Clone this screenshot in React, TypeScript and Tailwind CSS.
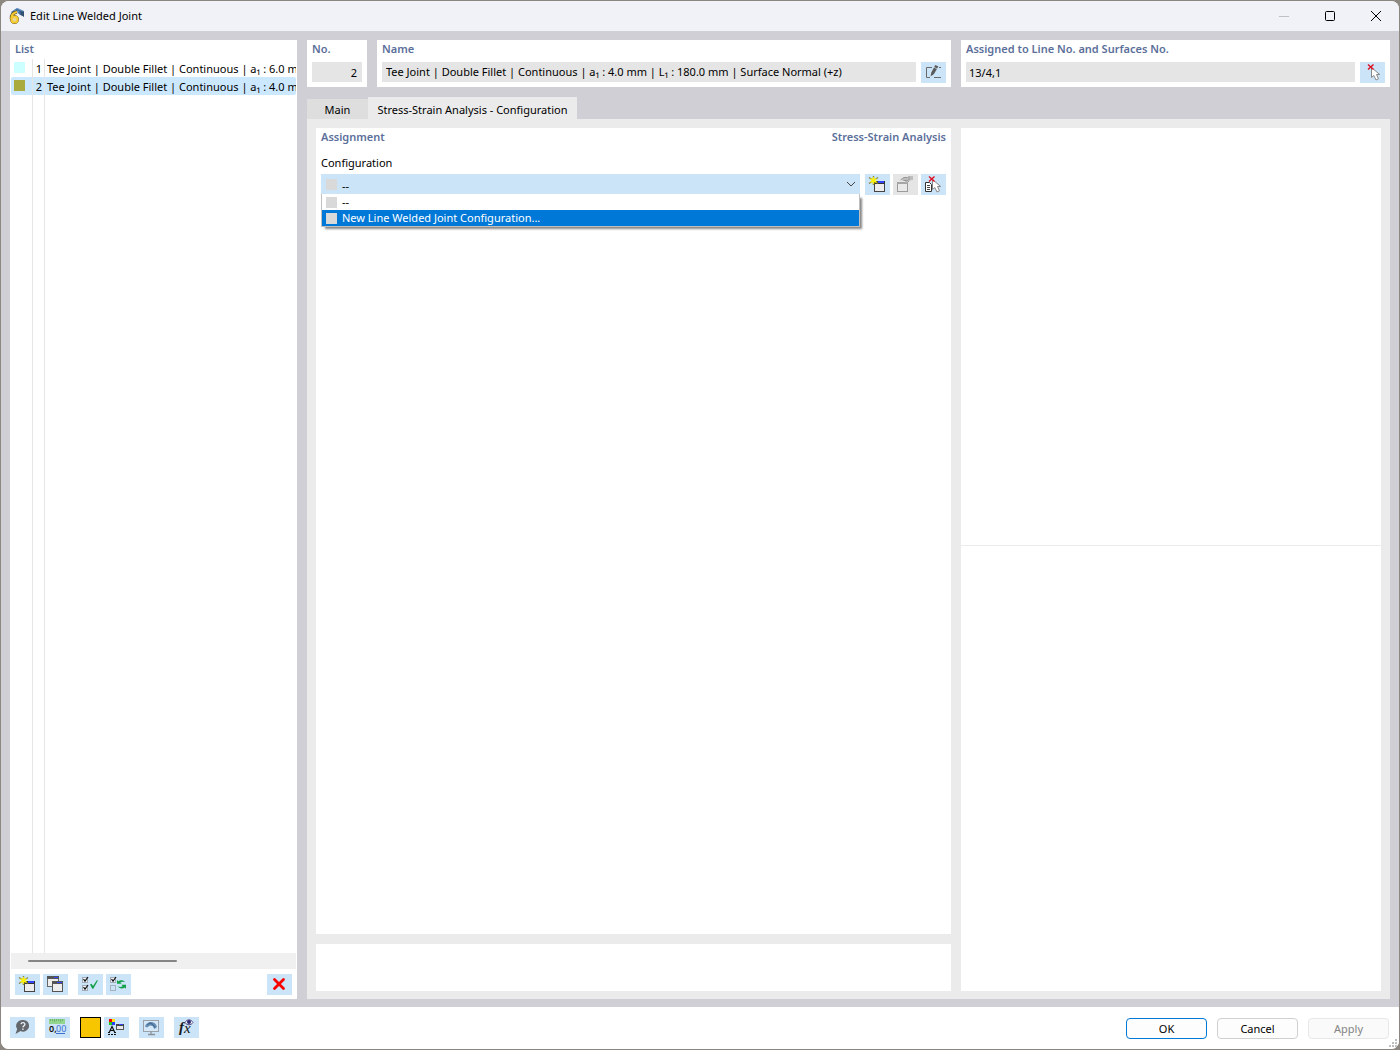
import React, { useState } from 'react';

interface Joint {
  no: number;
  color: string;
  name: string;
}

const joints: Joint[] = [
  { no: 1, color: 'bg-[#ccffff]', name: 'Tee Joint | Double Fillet | Continuous | a₁ : 6.0 mm | Surface Normal (+z)' },
  { no: 2, color: 'bg-[#a9ab3e]', name: 'Tee Joint | Double Fillet | Continuous | a₁ : 4.0 mm | L₁ : 180.0 mm | Surface Normal (+z)' },
];

const configurations = ['--', 'New Line Welded Joint Configuration...'];

const Icon: React.FC<{ children: React.ReactNode }> = ({ children }) => (
  <svg width="25" height="21" viewBox="0 0 25 21" fill="none" className="block">
    {children}
  </svg>
);

const Star = () => (
  <g>
    <path d="M8.5 2v9M4 3.5l9 6M13 3.5l-9 6" stroke="#85853c" strokeWidth="1.4" />
    <path d="M8.5 3v7M5.5 4.6l6 3.8M11.5 4.6l-6 3.8" stroke="#fff200" strokeWidth="1.3" />
    <circle cx="8.5" cy="6.5" r="2" fill="#fff200" />
  </g>
);

const NewIcon = () => (
  <Icon>
    <rect x="9.5" y="7.5" width="10" height="10" fill="#ededed" stroke="#444" />
    <rect x="9" y="7" width="11" height="3" fill="#333" />
    <rect x="13" y="7" width="6" height="2" fill="#3445ff" />
    <Star />
  </Icon>
);

const CopyIcon = () => (
  <Icon>
    <rect x="4.5" y="2.5" width="11" height="10" fill="#ededed" stroke="#666" />
    <rect x="4" y="2" width="12" height="3" fill="#555" />
    <rect x="11" y="3" width="4" height="1" fill="#3445ff" />
    <rect x="9.5" y="7.5" width="10" height="10" fill="#ededed" stroke="#555" />
    <rect x="9" y="7" width="11" height="3" fill="#555" />
    <rect x="14" y="8" width="5" height="1" fill="#3445ff" />
  </Icon>
);

const EditConfigIcon = () => (
  <Icon>
    <rect x="4.5" y="8.5" width="10" height="9" fill="#e9e9e9" stroke="#9b9b9b" />
    <rect x="4" y="8" width="11" height="2" fill="#a5a5a5" />
    <path d="M8 6l3-2.5h3l3-1.5h3v4l-4 .5-2 2h-2V7z" fill="#bdbdbd" />
    <path d="M7.5 6l3.500-2.500h3.500M10.500 6.500h4l1.500 1.500M16 2v4.500" stroke="#979797" />
  </Icon>
);

const Cursor = () => (
  <g>
    <path d="M11.5 5.500v10l2.300-2 2.200 4.500 2.500-1.200-2-4.300h3.200z" fill="#fff" stroke="#888" />
    <path d="M8 2.500l5.500 5M13.500 2.500l-5.500 5" stroke="#e01020" strokeWidth="1.400" />
  </g>
);

const PickIcon = () => (
  <Icon>
    <Cursor />
  </Icon>
);

const PickListIcon = () => (
  <Icon>
    <path d="M4.5 8.500h4l2 2v7h-6z" fill="#fff" stroke="#333" />
    <path d="M6 11.500h3M6 13.500h3M6 15.500h3" stroke="#444" />
    <Cursor />
  </Icon>
);

const PencilIcon = () => (
  <Icon>
    <path d="M11 5.500H5.500v10H9M13 15.500h7M18 5.500h2" stroke="#6a6a6a" />
    <path d="M9.500 14.500l.8-4 4-7.500 3 1.500-4.300 7.500z" fill="#5a5a5a" />
    <path d="M13 5.300l3 1.500" stroke="#cce4f7" strokeWidth=".7" />
  </Icon>
);

const Tick: React.FC<{ y: number }> = ({ y }) => (
  <g>
    <rect x="4.5" y={y + 0.5} width="5" height="5" fill="#eef6fc" stroke="#a3acb5" />
    <path d={`M5.5 ${y + 2}l1.5 2.2L10 ${y}`} stroke="#111" strokeWidth="1.2" />
  </g>
);

const CheckAllIcon = () => (
  <Icon>
    <Tick y={3} />
    <Tick y={11} />
    <path d="M12 10.500l1.500-.8 1.500 2.300 4-6 .8.8-4.500 8h-1z" fill="#10a048" />
  </Icon>
);

const InvertIcon = () => (
  <Icon>
    <Tick y={3} />
    <rect x="4.5" y="11.500" width="5" height="5" stroke="#a5b2bd" />
    <path d="M11 9.800V6l1.300 1.200c2-1.500 5-1.300 7 1-2-.7-3.700-.6-5 .3l1.200 1.300z" fill="#10a048" />
    <path d="M20 10.700v4l-1.300-1.200c-2 1.500-5 1.300-7-1 2 .7 3.700.6 5-.3l-1.200-1.500z" fill="#10a048" />
  </Icon>
);

const DeleteIcon = () => (
  <Icon>
    <path d="M7.500 5.500l9 9M16.500 5.500l-9 9" stroke="#fa0000" strokeWidth="2.800" strokeLinecap="round" />
  </Icon>
);

const HelpIcon = () => (
  <Icon>
    <path d="M13 3a6 5.800 0 1 1-2.500 11L5.500 17l1.700-5A6 5.800 0 0 1 13 3z" fill="#63666a" />
    <path d="M11 7.200c.3-2.200 4.100-2 3.900.2-.1 1.300-1.900 1.400-2 3" stroke="#e8f2fa" strokeWidth="1.300" />
    <rect x="12.200" y="11.500" width="1.400" height="1.400" fill="#e8f2fa" />
  </Icon>
);

const UnitsIcon = () => (
  <Icon>
    <rect x="4" y="2" width="16" height="5" fill="#93d48f" />
    <path d="M5.500 2v2M7.500 2v2M9.500 2v3M11.500 2v2M13.500 2v2M15.500 2v3M17.500 2v2" stroke="#6db56a" />
    <text x="4" y="15" fontSize="9" fontWeight="600" fill="#111">0,</text>
    <text x="11" y="15" fontSize="9" fill="#3a6fd0">00</text>
    <path d="M11 16.500h9" stroke="#3a6fd0" />
  </Icon>
);

const DisplayIcon = () => (
  <Icon>
    <rect x="5" y="2" width="3" height="3" fill="#f00" />
    <rect x="8" y="2" width="3" height="3" fill="#ffe600" />
    <rect x="5" y="5" width="3" height="3" fill="#1ec81e" />
    <rect x="8" y="5" width="3" height="3" fill="#2440ff" />
    <path d="M5 16l3-6.500 3 6.500M6 13.500h4M4 15.500h2M10 15.500h2" stroke="#111" strokeWidth="1.200" />
    <path d="M4 17.500h8" stroke="#111" strokeDasharray="2 1" />
    <rect x="12.500" y="7.500" width="7" height="5" fill="#e8e8e8" stroke="#555" />
    <rect x="12" y="7" width="8" height="2" fill="#444" />
    <rect x="15" y="7" width="4" height="1" fill="#3445ff" />
  </Icon>
);

const MonitorIcon = () => (
  <Icon>
    <rect x="4.500" y="3.500" width="15" height="11" fill="#d5e8f7" stroke="#9aa1a8" />
    <path d="M6 9.500c1-3.500 4-5 7-4.500 3 .5 4.500 2.500 5 5l-2.500 2-2-3-2.500-.5-3 2z" fill="#668db3" />
    <path d="M8 8c2-2 5-2 7 1M10 6c3 0 5 2 6 5" stroke="#3f6389" strokeWidth=".8" />
    <path d="M12 14.500V17M9 17.500h7" stroke="#8a9199" strokeWidth="1.300" />
  </Icon>
);

const FormulaIcon = () => (
  <Icon>
    <text x="5" y="15" fontSize="15" fontStyle="italic" fontWeight="bold" fill="#1a1a1a" style={{ fontFamily: '"Liberation Serif", serif' }}>f</text>
    <text x="10" y="16" fontSize="15" fontStyle="italic" fill="#111" style={{ fontFamily: '"Liberation Serif", serif' }}>x</text>
    <path d="M11 5.500c2-3.500 6-3.500 8 0-2 3-6 3-8 0z" fill="#fff" stroke="#4b4680" />
    <circle cx="15" cy="5" r="2" fill="#2c2870" />
  </Icon>
);

const AppIcon = () => (
  <svg width="16" height="16" viewBox="0 0 16 16" fill="none">
    <path d="M2 4l6-4 7 3v5l-4-1-3-3-4 2z" fill="#4472a5" />
    <path d="M11 3l4 1v5l-3-2z" fill="#35506f" />
    <path d="M5 2l5 2M8 0l6 3" stroke="#86aed2" strokeWidth=".8" />
    <path d="M8 4C4 4.500 2 7.500 2.500 11" stroke="#5c5433" strokeWidth="3.600" />
    <circle cx="5.500" cy="11.500" r="3" stroke="#6d6332" strokeWidth="3" />
    <path d="M8 4C4 4.500 2 7.500 2.500 11" stroke="#f7cb2e" strokeWidth="2.200" />
    <circle cx="5.500" cy="11.500" r="3" fill="#e6d69a" stroke="#f7cb2e" strokeWidth="2" />
  </svg>
);

interface ToolButtonProps {
  label: string;
  disabled?: boolean;
  children: React.ReactNode;
}

const ToolButton: React.FC<ToolButtonProps> = ({ label, disabled, children }) => (
  <button
    aria-label={label}
    disabled={disabled}
    className="w-[25px] h-[21px] shrink-0 bg-[#cce4f7] disabled:bg-[#e5e5e5]"
  >
    {children}
  </button>
);

const heading = 'font-semibold text-[#5b6f9a]';

const App: React.FC = () => {
  const [selected, setSelected] = useState(2);
  const [config, setConfig] = useState('--');
  const [isOpen, setIsOpen] = useState(true);
  const [highlighted, setHighlighted] = useState(configurations[1]);

  return (
    <div className="min-h-screen flex bg-[#8c8780] p-px font-['Noto_Sans','Open_Sans',sans-serif] text-[11px] leading-4 text-black">
      <div className="flex-1 min-w-0 flex flex-col rounded-lg overflow-hidden bg-white">
        {/* Title bar */}
        <header className="h-[30px] flex items-center bg-[#f0f2f7] pl-2">
          <AppIcon />
          <h1 className="ml-[5px] flex-1">Edit Line Welded Joint</h1>
          <button aria-label="Minimize" disabled className="w-[46px] h-full flex items-center justify-center">
            <svg width="10" height="10" stroke="#c0c0c4" fill="none"><path d="M0 5.5h10" /></svg>
          </button>
          <button aria-label="Maximize" className="w-[46px] h-full flex items-center justify-center">
            <svg width="10" height="10" stroke="#000" fill="none"><rect x=".5" y=".5" width="9" height="9" rx="1" /></svg>
          </button>
          <button aria-label="Close" className="w-[46px] h-full flex items-center justify-center">
            <svg width="10" height="10" stroke="#000" fill="none"><path d="M0 0l10 10M10 0L0 10" /></svg>
          </button>
        </header>

        <div className="flex-1 flex gap-2.5 bg-[#d0cfd5] px-[9px] pt-[9px] pb-2">
          {/* List */}
          <aside className="w-[287px] shrink-0 flex flex-col bg-white">
            <h2 className={`${heading} pl-[5px] pt-px h-[19px]`}>List</h2>
            <div className="flex-1 flex flex-col overflow-hidden px-px">
              {joints.map(joint => (
                <button
                  key={joint.no}
                  onClick={() => setSelected(joint.no)}
                  className={`h-[18px] shrink-0 flex items-stretch text-left whitespace-nowrap overflow-hidden ${selected === joint.no ? 'bg-[#cce8ff] rounded-xs' : ''}`}
                >
                  <span className="w-[22px] pl-[3px] pt-[3px] border-r border-[#e5e5e5] shrink-0">
                    <span className={`block size-[11px] ${joint.color}`} />
                  </span>
                  <span className="w-3 shrink-0 border-r border-[#e5e5e5] text-right pr-0.5 pt-0.5">{joint.no}</span>
                  <span className="pl-0.5 pt-0.5">{joint.name}</span>
                </button>
              ))}
              <div className="flex-1 flex">
                <div className="w-[22px] border-r border-[#e5e5e5]" />
                <div className="w-3 border-r border-[#e5e5e5]" />
              </div>
            </div>
            <div className="h-4 mx-px bg-[#f0f0f0] flex items-center pl-[17px]">
              <div className="w-[149px] h-0.5 bg-[#868686] rounded-full" />
            </div>
            <div className="flex gap-[3px] px-[5px] pt-[5px] pb-1">
              <ToolButton label="New"><NewIcon /></ToolButton>
              <ToolButton label="Copy"><CopyIcon /></ToolButton>
              <div className="w-1" />
              <ToolButton label="Check all"><CheckAllIcon /></ToolButton>
              <ToolButton label="Invert"><InvertIcon /></ToolButton>
              <div className="flex-1" />
              <ToolButton label="Delete"><DeleteIcon /></ToolButton>
            </div>
          </aside>

          <main className="flex-1 min-w-0 flex flex-col">
            <div className="flex gap-2.5">
              <div className="w-[60px] h-[47px] bg-white px-[5px] pt-px">
                <label htmlFor="no" className={`${heading} block h-[21px]`}>No.</label>
                <input id="no" readOnly value="2" className="block w-full h-5 pr-[5px] bg-[#e5e5e5] text-right" />
              </div>
              <div className="flex-1 min-w-0 h-[47px] bg-white px-[5px] pt-px">
                <label htmlFor="name" className={`${heading} block h-[21px]`}>Name</label>
                <div className="flex gap-[5px]">
                  <input id="name" readOnly value={joints[1].name} className="flex-1 min-w-0 h-5 px-1 pb-px bg-[#e5e5e5]" />
                  <ToolButton label="Edit name"><PencilIcon /></ToolButton>
                </div>
              </div>
              <div className="w-[429px] h-[47px] bg-white px-[5px] pt-px">
                <label htmlFor="assigned" className={`${heading} block h-[21px]`}>Assigned to Line No. and Surfaces No.</label>
                <div className="flex gap-[5px]">
                  <input id="assigned" readOnly value="13/4,1" className="flex-1 min-w-0 h-5 px-[3px] bg-[#e5e5e5]" />
                  <ToolButton label="Pick lines"><PickIcon /></ToolButton>
                </div>
              </div>
            </div>

            {/* Tabs */}
            <div className="flex items-end mt-2.5" role="tablist">
              <button role="tab" aria-selected="false" className="w-[61px] h-5 pt-0.5 bg-[#dedede]">Main</button>
              <button role="tab" aria-selected="true" className="w-[209px] h-[22px] pt-1 bg-[#ebebeb]">Stress-Strain Analysis - Configuration</button>
            </div>

            <div className="flex-1 flex gap-2.5 bg-[#ebebeb] p-[9px] pb-2">
              <div className="flex-1 min-w-0 flex flex-col gap-2.5">
                <section className="flex-1 bg-white px-[5px] pt-px">
                  <div className={`${heading} flex justify-between`}>
                    <h2>Assignment</h2>
                    <span>Stress-Strain Analysis</span>
                  </div>
                  <label htmlFor="configuration" className="block mt-2.5 h-[19px]">Configuration</label>
                  <div className="flex gap-[3px]">
                    <div className="relative flex-1 mr-0.5">
                      <select
                        id="configuration"
                        value={config}
                        onChange={e => setConfig(e.target.value)}
                        onMouseDown={e => {
                          e.preventDefault();
                          setIsOpen(!isOpen);
                        }}
                        className="block w-full h-5 appearance-none bg-[#cce4f7] pl-[21px] pt-[3px]"
                      >
                        {configurations.map(c => <option key={c}>{c}</option>)}
                      </select>
                      <span className="absolute left-[5px] top-[5px] size-[11px] bg-[#d9d9d9]" />
                      <svg className="absolute right-1 top-1.5 pointer-events-none" width="10" height="8" fill="none" stroke="#444">
                        <path d="M1 2l4 4 4-4" />
                      </svg>
                      {isOpen && (
                        <ul className="absolute top-5 left-0 right-0 z-10 bg-white border border-t-0 border-[#c0c0c0] shadow-[3px_3px_2px_-1px_#888]">
                          {configurations.map(c => (
                            <li key={c}>
                              <button
                                onMouseEnter={() => setHighlighted(c)}
                                onClick={() => {
                                  setConfig(c);
                                  setIsOpen(false);
                                }}
                                className={`w-full h-4 flex items-center gap-[5px] pl-1 ${highlighted === c ? 'bg-[#0078d7] text-white' : ''}`}
                              >
                                <span className="size-[11px] bg-[#d9d9d9]" />
                                {c}
                              </button>
                            </li>
                          ))}
                        </ul>
                      )}
                    </div>
                    <ToolButton label="New configuration"><NewIcon /></ToolButton>
                    <ToolButton label="Edit configuration" disabled><EditConfigIcon /></ToolButton>
                    <ToolButton label="Pick configuration"><PickListIcon /></ToolButton>
                  </div>
                </section>
                <section className="h-[47px] bg-white" />
              </div>
              <div className="w-[420px] flex flex-col bg-white">
                <div className="h-[418px] border-b border-[#ebebeb]" />
                <div className="flex-1" />
              </div>
            </div>
          </main>
        </div>

        {/* Footer */}
        <footer className="relative flex items-end justify-between pl-[9px] pr-2.5 pt-2.5 pb-2.5 bg-white">
          <div className="flex gap-2.5 pb-px">
            <ToolButton label="Help"><HelpIcon /></ToolButton>
            <ToolButton label="Units"><UnitsIcon /></ToolButton>
            <div className="flex gap-[3px]">
              <button aria-label="Color" className="w-[21px] h-[21px] bg-[#f7c600] border border-black" />
              <ToolButton label="Display properties"><DisplayIcon /></ToolButton>
            </div>
            <ToolButton label="View"><MonitorIcon /></ToolButton>
            <ToolButton label="Formula"><FormulaIcon /></ToolButton>
          </div>
          <div className="flex gap-2.5">
            <button className="w-[81px] h-[21px] pt-px rounded-sm border border-[#0078d4] bg-[#fdfdfd]">OK</button>
            <button className="w-[81px] h-[21px] pt-px rounded-sm border border-[#d0d0d0] bg-[#fdfdfd]">Cancel</button>
            <button disabled className="w-[81px] h-[21px] pt-px rounded-sm border border-[#e8e8e8] bg-[#fafafa] text-[#838383]">Apply</button>
          </div>
          <svg className="absolute right-0.5 bottom-0.5" width="8" height="8" fill="#bfbfbf">
            <path d="M6 0h2v2H6zM3 3h2v2H3zM6 3h2v2H6zM0 6h2v2H0zM3 6h2v2H3zM6 6h2v2H6z" />
          </svg>
        </footer>
      </div>
    </div>
  );
};

export default App;
